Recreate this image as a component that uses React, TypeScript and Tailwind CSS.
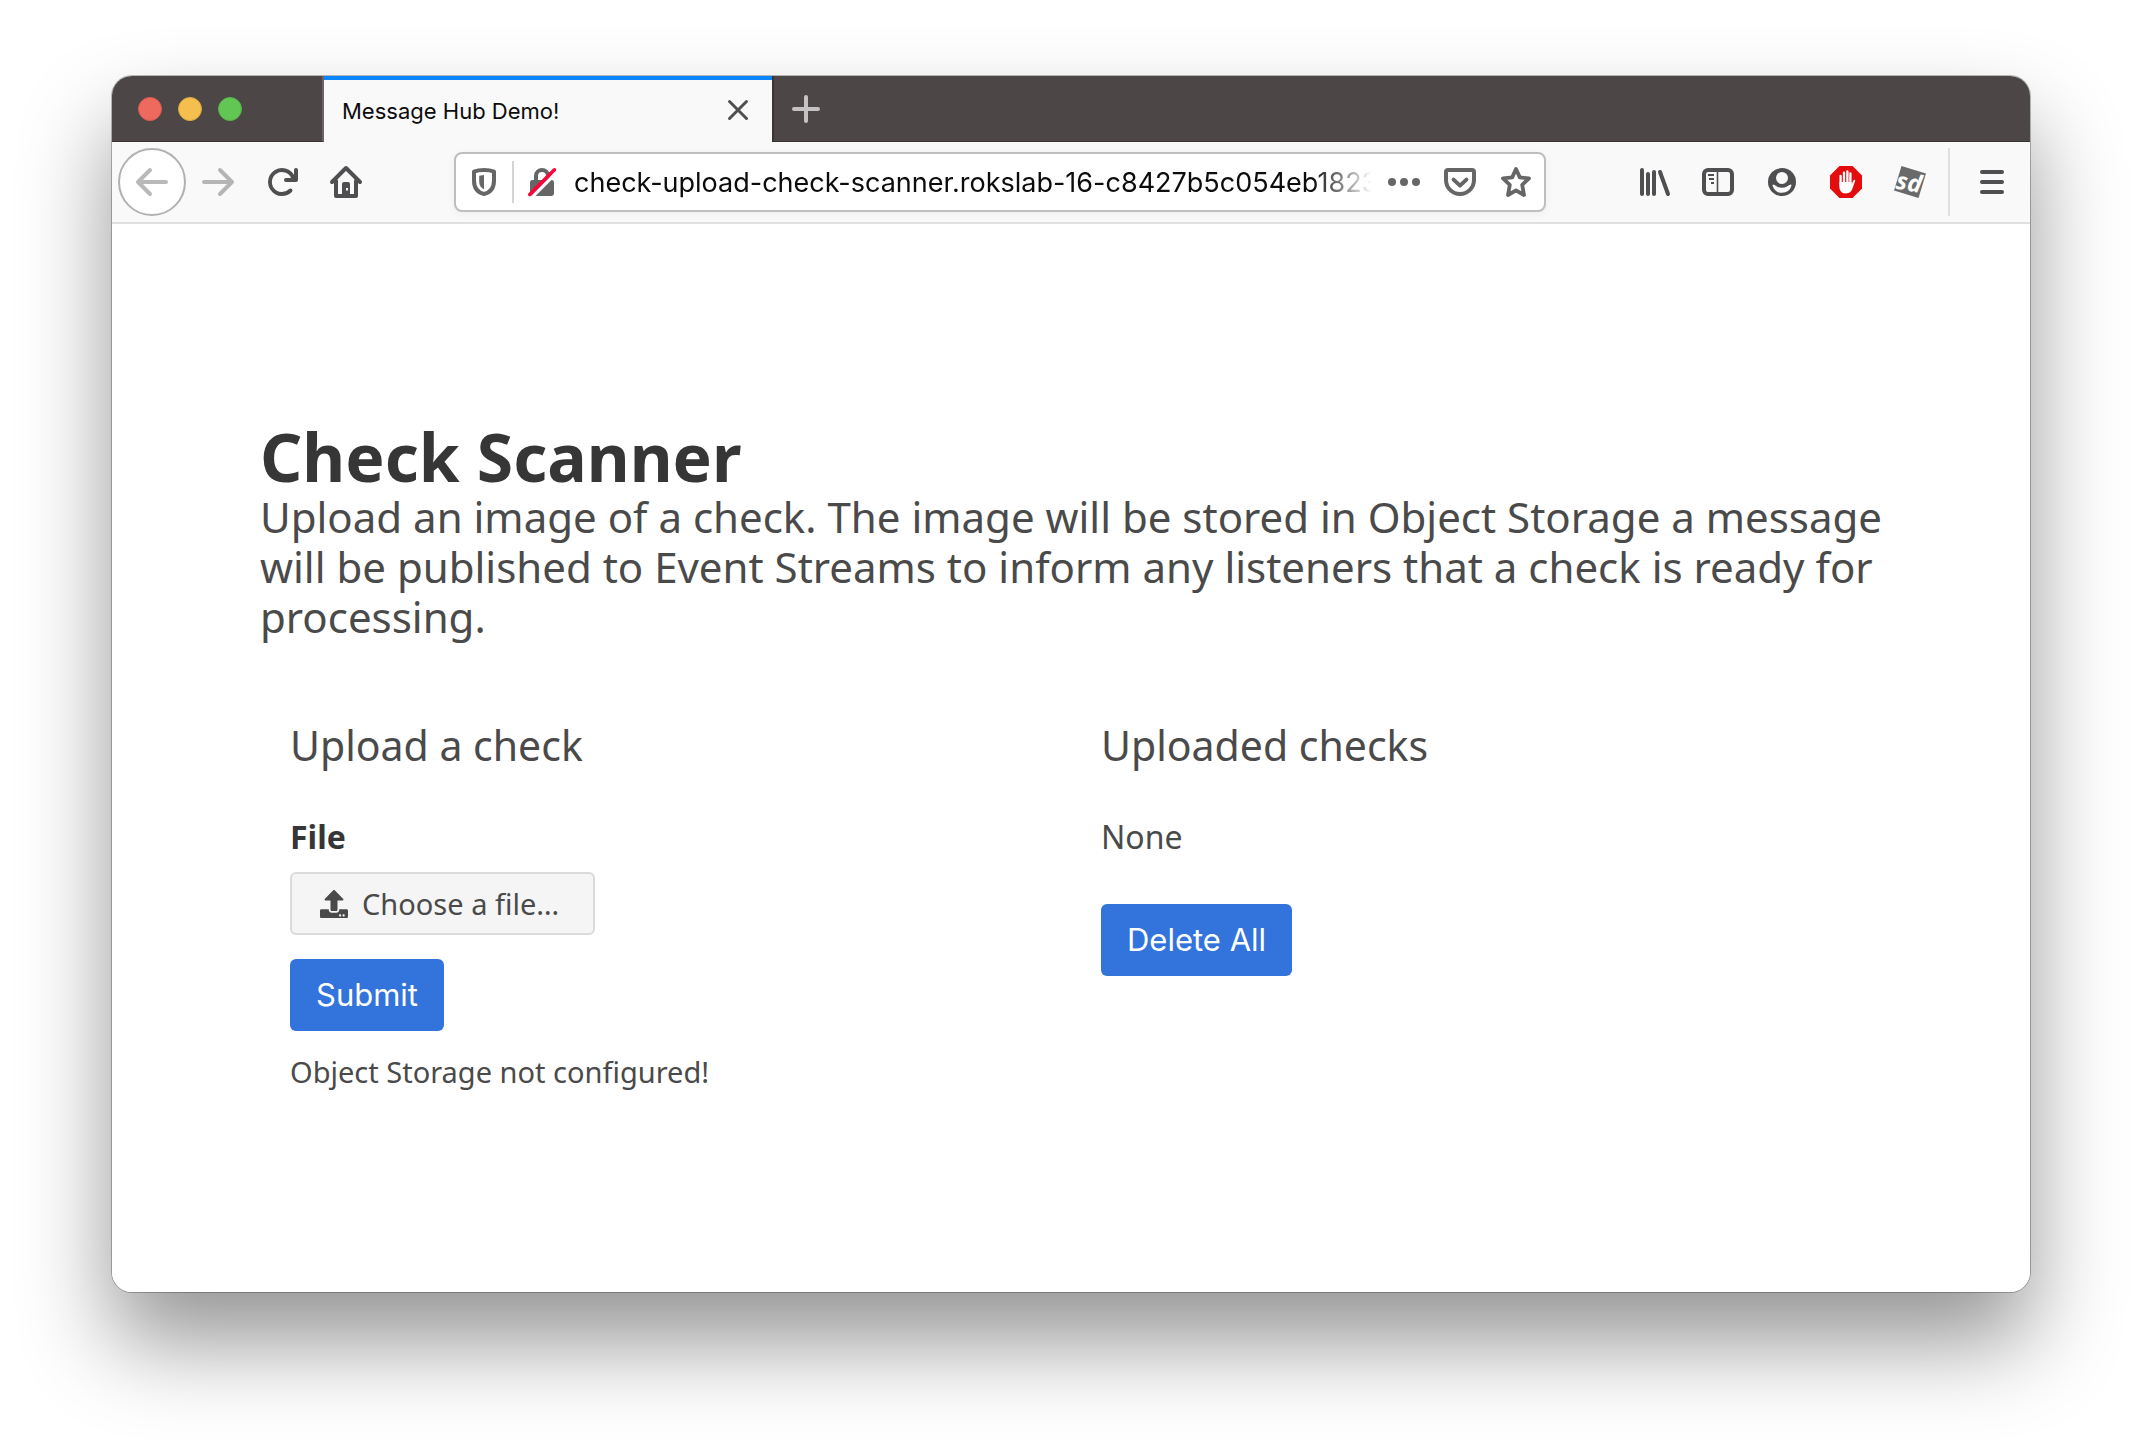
import React from "react";

type IconProps = { children: React.ReactNode; className?: string };

function Icon({ children, className = "text-[#4f4f51]" }: IconProps) {
  return (
    <svg viewBox="0 0 16 16" className={`size-8 shrink-0 overflow-visible ${className}`} fill="none" aria-hidden="true">
      {children}
    </svg>
  );
}

const line = {
  stroke: "currentColor",
  strokeWidth: 2,
  strokeLinecap: "round" as const,
  strokeLinejoin: "round" as const,
};

function ToolButton({ label, children }: { label: string; children: React.ReactNode }) {
  return (
    <button type="button" aria-label={label} className="flex h-16 w-16 shrink-0 items-center justify-center">
      {children}
    </button>
  );
}

function TitleBar() {
  return (
    <div className="flex h-[66px] bg-[#4d4646]">
      <div className="flex w-[212px] shrink-0 items-center gap-4 border-r-2 border-b border-r-[#6a6464] border-b-[#3a3434] pl-[26px]">
        <button type="button" aria-label="Close window" className="size-6 rounded-full border border-[#d85b50] bg-[#ee6a5f]" />
        <button type="button" aria-label="Minimize window" className="size-6 rounded-full border border-[#dba63f] bg-[#f5bf4f]" />
        <button type="button" aria-label="Zoom window" className="size-6 rounded-full border border-[#54b345] bg-[#62c654]" />
      </div>
      <div className="flex w-[448px] shrink-0 items-center justify-between border-t-4 border-[#0a84ff] bg-[#f9f9fa] pr-5 pl-[18px]">
        <span className="text-[22px] leading-8 text-[#0c0c0d]">Message Hub Demo!</span>
        <button type="button" aria-label="Close tab" className="flex size-7 items-center justify-center">
          <svg viewBox="0 0 28 28" className="size-7 text-[#4f4f51]" fill="none" aria-hidden="true">
            <path d="M5.500 4.500l17 17M22.500 4.500l-17 17" stroke="currentColor" strokeWidth="3" strokeLinecap="round" />
          </svg>
        </button>
      </div>
      <div className="flex flex-1 items-center border-b border-l-2 border-[#3a3434] pl-4">
        <button type="button" aria-label="New tab">
          <Icon className="text-[#c4c2c2]">
            <path d="M8 2v12M2 8h12" {...line} />
          </Icon>
        </button>
      </div>
    </div>
  );
}

function AddressBar() {
  return (
    <div className="flex h-[60px] min-w-0 flex-1 items-center rounded-lg border-2 border-[#bebebe] bg-white pr-3 pl-3 shadow-[0_2px_8px_rgba(0,0,0,0.05)]">
      <button type="button" aria-label="Tracking protection">
        <Icon className="text-[#666666]">
          <path d="M8 2c2 0 3.600.25 5 .8v4.500c0 3.600-1.900 6-5 6.700-3.100-.7-5-3.100-5-6.700V2.800C4.400 2.250 6 2 8 2z" {...line} />
          <path d="M8 4.500l-2.400.4v2.700c0 2 .8 3.400 2.400 4z" fill="currentColor" />
        </Icon>
      </button>
      <span className="mx-3 h-[42px] w-0.5 shrink-0 bg-[#d4d4d4]" />
      <button type="button" aria-label="Connection is not secure">
        <Icon className="text-[#666666]">
          <path d="M5 8V5a3 3 0 0 1 6 0v3" stroke="currentColor" strokeWidth="2" />
          <rect x="2" y="7" width="12" height="8" rx="1.200" fill="currentColor" />
          <path d="M3.200 15.400L15.400 3.200" stroke="white" strokeWidth="1.600" />
          <path d="M1.900 14.200L14.200 1.900" stroke="#ff0039" strokeWidth="1.800" strokeLinecap="round" />
        </Icon>
      </button>
      <input
        aria-label="Address"
        readOnly
        value="check-upload-check-scanner.rokslab-16-c8427b5c054eb1823"
        className="ml-4 min-w-0 flex-1 bg-transparent pt-0.5 text-[27px] leading-10 text-[#0c0c0d] outline-none [mask-image:linear-gradient(to_right,black_calc(100%-64px),transparent_calc(100%-4px))]"
      />
      <div className="ml-3 flex items-center gap-6">
        <button type="button" aria-label="Page actions">
          <Icon className="text-[#666666]">
            <circle cx="2" cy="8" r="2" fill="currentColor" />
            <circle cx="8" cy="8" r="2" fill="currentColor" />
            <circle cx="14" cy="8" r="2" fill="currentColor" />
          </Icon>
        </button>
        <button type="button" aria-label="Save to Pocket">
          <Icon className="text-[#666666]">
            <path d="M2 2h12a1 1 0 0 1 1 1v4a7 7 0 0 1-14 0V3a1 1 0 0 1 1-1z" {...line} />
            <path d="M4.800 6.800L8 9.800l3.200-3" {...line} />
          </Icon>
        </button>
        <button type="button" aria-label="Bookmark this page">
          <Icon className="text-[#666666]">
            <path d="M8 1.500l1.900 4.200 4.600.5-3.400 3.200.9 5.100L8 12.200l-4 2.300.9-5.100L1.500 6.200l4.600-.5z" {...line} strokeWidth={1.900} />
          </Icon>
        </button>
      </div>
    </div>
  );
}

function Toolbar() {
  return (
    <div className="flex h-[82px] items-center border-b-2 border-[#e0e0e1] bg-[#f9f9fa]">
      <button
        type="button"
        aria-label="Back"
        className="ml-1.5 flex size-[68px] shrink-0 items-center justify-center rounded-full border-2 border-[#b1b1b1] bg-white"
      >
        <Icon className="text-[#b9b9b9]">
          <path d="M15 8H1M7 2L1 8l6 6" {...line} />
        </Icon>
      </button>
      <ToolButton label="Forward">
        <Icon className="text-[#b5b5b6]">
          <path d="M1 8h14M9 2l6 6-6 6" {...line} />
        </Icon>
      </ToolButton>
      <ToolButton label="Reload">
        <Icon>
          <path
            fill="currentColor"
            d="M15 1a1 1 0 0 0-1 1v2.418A6.995 6.995 0 1 0 8 15a6.954 6.954 0 0 0 4.950-2.050 1 1 0 0 0-1.414-1.414A5.019 5.019 0 1 1 12.549 6H10a1 1 0 0 0 0 2h5a1 1 0 0 0 1-1V2a1 1 0 0 0-1-1z"
          />
        </Icon>
      </ToolButton>
      <ToolButton label="Home">
        <Icon>
          <path d="M1 8l7-7 7 7M3 7.500V15h10V7.500" {...line} />
          <path
            fill="currentColor"
            fillRule="evenodd"
            d="M6 15V9a1 1 0 0 1 1-1h2a1 1 0 0 1 1 1v6zM8 11v1.200h1V11z"
          />
        </Icon>
      </ToolButton>
      <div className="w-[76px] shrink-0" />
      <AddressBar />
      <div className="w-[76px] shrink-0" />
      <ToolButton label="Library">
        <Icon>
          <path d="M2 2v12M5 4v10M8 3v11M11 3l4 11" {...line} />
        </Icon>
      </ToolButton>
      <ToolButton label="Sidebars">
        <Icon>
          <rect x="1" y="2" width="14" height="12" rx="2" {...line} />
          <path d="M7.750 2v12" stroke="currentColor" strokeWidth="0.800" />
          <path d="M3 4.500h3M3.500 6.500H6M4.500 8.500H6" stroke="currentColor" strokeWidth="1" />
        </Icon>
      </ToolButton>
      <ToolButton label="Account">
        <Icon>
          <circle cx="8" cy="8" r="7" fill="currentColor" />
          <path d="M3.700 9.300c.8.400 1.300.7 1.800 1 1.500.8 3.500.8 5 0 .5-.3 1-.6 1.800-1 .4 0 .5.300.4.600a4.900 4.900 0 0 1-9.400 0c-.1-.3 0-.6.400-.6z" fill="#f9f9fa" />
          <circle cx="8" cy="6" r="3" fill="#f9f9fa" />
        </Icon>
      </ToolButton>
      <ToolButton label="Ad blocker">
        <Icon>
          <path d="M4.700 0h6.600L16 4.700v6.600L11.300 16H4.700L0 11.300V4.700z" fill="#e40d0d" />
          <path d="M5.300 4.900v5M7 3.300v6M8.700 2.700v6M10.200 3.700v6" stroke="white" strokeWidth="1.150" strokeLinecap="round" />
          <path d="M4.730 8h6.050v1.200l.9-1.900c.3-.6 1-.6.900.1l-1.400 4c-.5 1.500-1.500 2.300-3.300 2.300-2.200 0-3.150-1.400-3.150-3.200z" fill="white" />
        </Icon>
      </ToolButton>
      <ToolButton label="Site details">
        <Icon>
          <rect x="1.600" y="1.600" width="12.800" height="12.800" fill="#6a6a6b" transform="rotate(17 8 8)" />
          <text
            x="7.600"
            y="12.500"
            textAnchor="middle"
            fill="white"
            className="font-['Open_Sans',sans-serif] text-[12px] font-bold italic"
            transform="rotate(10 8 8)"
          >
            sd
          </text>
        </Icon>
      </ToolButton>
      <span className="ml-1.5 h-[68px] w-0.5 shrink-0 bg-[#e0e0e1]" />
      <button type="button" aria-label="Open menu" className="mr-1.5 ml-2.5 flex h-16 w-16 shrink-0 items-center justify-center">
        <Icon>
          <path d="M3 3h10M3 8h10M3 13h10" {...line} />
        </Icon>
      </button>
    </div>
  );
}

function UploadIcon() {
  return (
    <svg viewBox="0 0 512 512" className="size-7 shrink-0" fill="currentColor" aria-hidden="true">
      <path d="M296 384h-80c-13.300 0-24-10.700-24-24V192h-87.700c-17.800 0-26.700-21.500-14.100-34.100L242.300 5.700c7.500-7.500 19.800-7.500 27.300 0l152.200 152.200c12.600 12.600 3.700 34.100-14.100 34.100H320v168c0 13.300-10.700 24-24 24zm216-8v112c0 13.300-10.700 24-24 24H24c-13.300 0-24-10.700-24-24V376c0-13.300 10.700-24 24-24h136v8c0 30.900 25.100 56 56 56h80c30.900 0 56-25.100 56-56v-8h136c13.300 0 24 10.700 24 24zm-124 88c0-11-9-20-20-20s-20 9-20 20 9 20 20 20 20-9 20-20zm64 0c0-11-9-20-20-20s-20 9-20 20 9 20 20 20 20-9 20-20z" />
    </svg>
  );
}

const primaryButton =
  "rounded-md bg-[#3273dc] px-[26px] py-3 font-[Inter,sans-serif] text-[31px] leading-[48px] text-white";

function Page() {
  return (
    <main className="bg-white px-[148px] pt-[196px] pb-[199px] font-['Noto_Sans',sans-serif] text-[#4a4a4a]">
      <h1 className="text-[66px] leading-[72px] font-bold text-[#363636]">Check Scanner</h1>
      <p className="text-[42px] leading-[50px]">
        Upload an image of a check. The image will be stored in Object Storage a message will be published to Event
        Streams to inform any listeners that a check is ready for processing.
      </p>
      <div className="mt-[78px] grid grid-cols-2">
        <form className="px-[30px]" onSubmit={(e) => e.preventDefault()}>
          <h2 className="text-[41px] leading-[50px]">Upload a check</h2>
          <label htmlFor="check-file" className="mt-[43px] block text-[32px] leading-[48px] font-bold text-[#363636]">
            File
          </label>
          <div className="relative mt-[11px] flex">
            <input id="check-file" type="file" className="peer sr-only" />
            <label
              htmlFor="check-file"
              className="flex h-[63px] items-center gap-3.5 rounded-md border-2 border-[#dbdbdb] bg-[#f5f5f5] pr-[34px] pl-7 text-[29px] leading-10"
            >
              <UploadIcon />
              Choose a file…
            </label>
          </div>
          <button type="submit" className={`mt-6 block ${primaryButton}`}>
            Submit
          </button>
          <p className="mt-5 text-[29px] leading-[42px]">Object Storage not configured!</p>
        </form>
        <section className="px-[30px]">
          <h2 className="text-[41px] leading-[50px]">Uploaded checks</h2>
          <p className="mt-[43px] text-[32px] leading-[48px]">None</p>
          <button type="button" className={`mt-[43px] block ${primaryButton}`}>
            Delete All
          </button>
        </section>
      </div>
    </main>
  );
}

export default function App() {
  return (
    <div className="min-h-screen overflow-hidden bg-white px-28 pt-[76px] pb-[148px] font-[Inter,sans-serif]">
      <div className="rounded-[20px] shadow-[0_0_0_1px_rgba(0,0,0,0.25),0_50px_90px_rgba(0,0,0,0.42)]">
        <div className="overflow-hidden rounded-[20px]">
          <TitleBar />
          <Toolbar />
          <Page />
        </div>
      </div>
    </div>
  );
}
